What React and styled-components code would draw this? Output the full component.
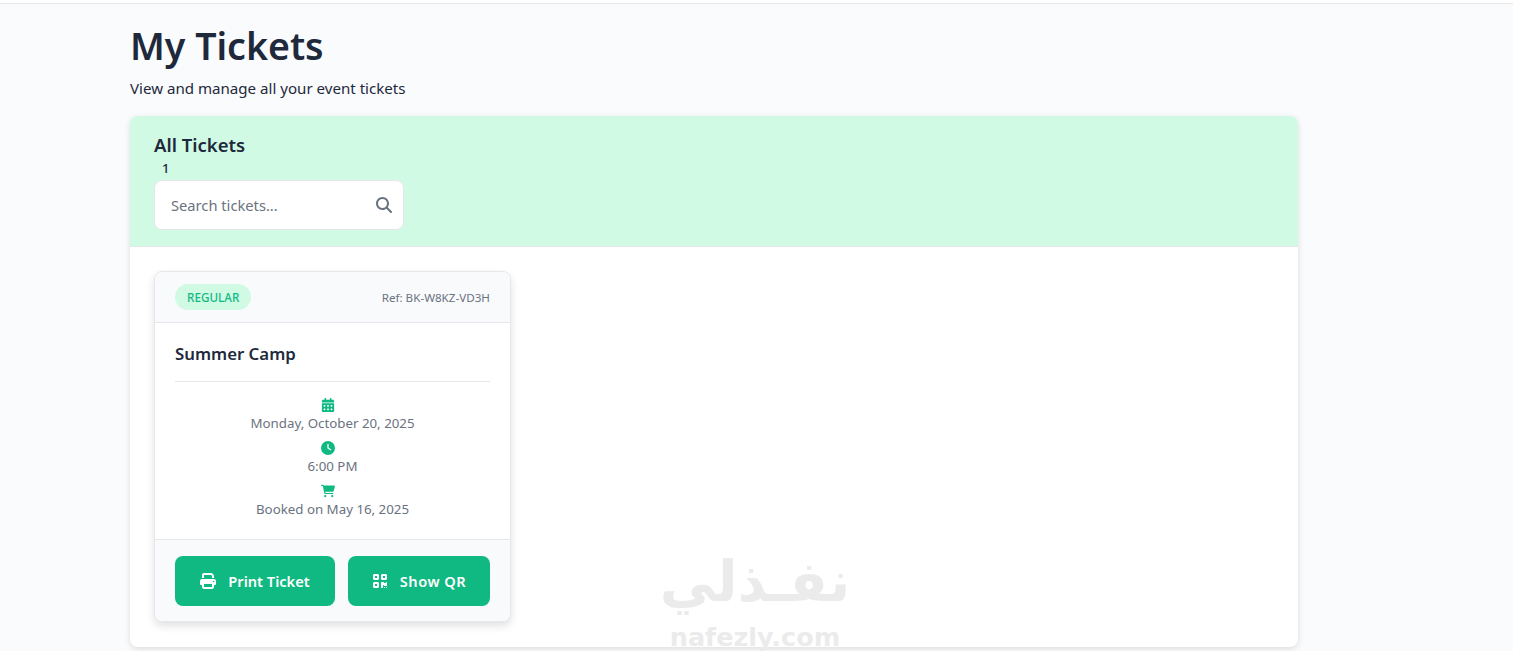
import React from "react";
import styled, { createGlobalStyle } from "styled-components";
import { FaCalendarDays, FaClock, FaCartShopping, FaPrint, FaQrcode, FaMagnifyingGlass } from "react-icons/fa6";

const Global = createGlobalStyle`
  * { box-sizing: border-box; }
  html, body { margin: 0; height: 100%; overflow: hidden; }
  body { background: #fafbfd; font-family: "Noto Sans", "Open Sans", sans-serif; color: #1f2937; }
`;

const TopRule = styled.div`
  height: 4px;
  background: #fff;
  border-bottom: 1px solid #e5e7eb;
`;
const Page = styled.main`
  width: 1168px;
  margin-left: 130px;
  padding-top: 19px;
`;
const Title = styled.h1`
  margin: 0;
  font-size: 37.5px;
  line-height: 46px;
  font-weight: 600;
  color: #1e293b;
`;
const Subtitle = styled.p`
  margin: 8px 0 0;
  font-size: 15.1px;
  line-height: 22px;
  color: #1e293b;
`;
const Panel = styled.section`
  margin-top: 17px;
  background: #fff;
  border-radius: 8px;
  box-shadow: 0 2px 6px rgba(0, 0, 0, 0.12);
  overflow: hidden;
  height: 531px;
`;
const PanelHead = styled.header`
  height: 131px;
  background: #d1fae5;
  padding: 17px 24px 0;
  border-bottom: 1px solid #e5e7eb;
`;
const PanelTitle = styled.h2`
  margin: 0;
  font-size: 18.5px;
  line-height: 24px;
  font-weight: 600;
  color: #1e293b;
`;
const Count = styled.div`
  margin: 3px 0 0 8px;
  font-size: 13px;
  line-height: 16px;
  font-weight: 500;
  color: #1e293b;
`;
const SearchBox = styled.div`
  width: 250px;
  height: 50px;
  margin-top: 4px;
  padding: 0 11px 0 16px;
  display: flex;
  align-items: center;
  justify-content: space-between;
  background: #fff;
  border: 1px solid #e5e7eb;
  border-radius: 8px;
  color: #6b7280;
`;
const SearchInput = styled.input`
  flex: 1;
  min-width: 0;
  border: 0;
  outline: 0;
  padding: 0;
  background: transparent;
  font: 400 14.7px "Noto Sans", sans-serif;
  &::placeholder { color: #6b7280; opacity: 1; }
`;
const PanelBody = styled.div`
  padding: 24px;
`;
const Card = styled.article`
  width: 357px;
  height: 351px;
  display: flex;
  flex-direction: column;
  background: #fff;
  border: 1px solid #e5e7eb;
  border-radius: 8px;
  box-shadow: 0 4px 8px rgba(0, 0, 0, 0.12);
  overflow: hidden;
`;
const CardHead = styled.div`
  height: 51px;
  padding: 0 20px;
  display: flex;
  align-items: center;
  justify-content: space-between;
  background: #f9fafb;
  border-bottom: 1px solid #e5e7eb;
`;
const Badge = styled.span`
  height: 26px;
  padding: 0 12px;
  display: inline-flex;
  align-items: center;
  background: #d1fae5;
  border-radius: 13px;
  color: #10b981;
  font-size: 11.7px;
  font-weight: 500;
`;
const Ref = styled.span`
  font-size: 11.65px;
  color: #6b7280;
`;
const CardBody = styled.div`
  flex: 1;
  padding: 20px 20px 0;
`;
const EventName = styled.h3`
  margin: 0;
  padding-bottom: 16px;
  border-bottom: 1px solid #e5e7eb;
  font-size: 16.8px;
  line-height: 22px;
  font-weight: 600;
  color: #1e293b;
`;
const Details = styled.div`
  margin-top: 14px;
  display: flex;
  flex-direction: column;
  gap: 7px;
`;
const Detail = styled.div`
  display: flex;
  flex-direction: column;
  align-items: center;
  font-size: 13.3px;
  line-height: 18px;
  color: #6b7280;
  svg {
    color: #10b981;
    display: block;
    width: auto;
    height: 14px;
    margin: 2px 10px 2px 0;
  }
`;
const CardFoot = styled.div`
  height: 82px;
  padding: 16px 20px 0;
  display: flex;
  gap: 13px;
  background: #f9fafb;
  border-top: 1px solid #e5e7eb;
`;
const Action = styled.button`
  width: ${(p) => p.$w}px;
  height: 50px;
  display: flex;
  align-items: center;
  justify-content: center;
  gap: 12px;
  border: 0;
  border-radius: 8px;
  background: #10b981;
  color: #fff;
  font: 600 14.6px "Noto Sans", sans-serif;
  letter-spacing: ${(p) => p.$tracking || 0}px;
  svg { font-size: 16px; }
`;
const Watermark = styled.div`
  position: absolute;
  left: 640px;
  top: 547px;
  width: 230px;
  display: flex;
  flex-direction: column;
  align-items: center;
  color: #ebebeb;
  pointer-events: none;
`;
const WatermarkArabic = styled.div`
  font: 700 56px/70px "DejaVu Sans", sans-serif;
`;
const WatermarkLatin = styled.div`
  font: 700 25.5px/40px "DejaVu Sans", sans-serif;
`;

export default function App() {
  return (
    <>
      <Global />
      <TopRule />
      <Page>
        <Title>My Tickets</Title>
        <Subtitle>View and manage all your event tickets</Subtitle>
        <Panel>
          <PanelHead>
            <PanelTitle>All Tickets</PanelTitle>
            <Count>1</Count>
            <SearchBox>
              <SearchInput placeholder="Search tickets..." />
              <FaMagnifyingGlass size={16} />
            </SearchBox>
          </PanelHead>
          <PanelBody>
            <Card>
              <CardHead>
                <Badge>REGULAR</Badge>
                <Ref>Ref: BK-W8KZ-VD3H</Ref>
              </CardHead>
              <CardBody>
                <EventName>Summer Camp</EventName>
                <Details>
                  <Detail><FaCalendarDays />Monday, October 20, 2025</Detail>
                  <Detail><FaClock />6:00 PM</Detail>
                  <Detail><FaCartShopping />Booked on May 16, 2025</Detail>
                </Details>
              </CardBody>
              <CardFoot>
                <Action $w={160}><FaPrint />Print Ticket</Action>
                <Action $w={142} $tracking={0.5}><FaQrcode />Show QR</Action>
              </CardFoot>
            </Card>
          </PanelBody>
        </Panel>
      </Page>
      <Watermark>
        <WatermarkArabic lang="ar" dir="rtl">نفـذلي</WatermarkArabic>
        <WatermarkLatin>nafezly.com</WatermarkLatin>
      </Watermark>
    </>
  );
}
